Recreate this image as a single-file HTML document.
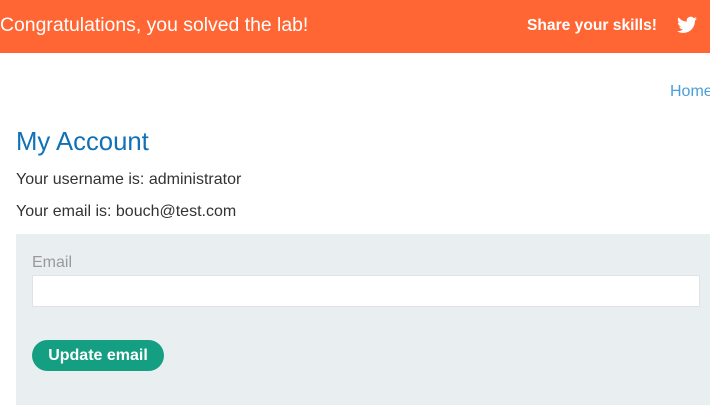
<!DOCTYPE html>
<html><head><style>
*{margin:0;padding:0;box-sizing:border-box}
body{width:710px;height:405px;overflow:hidden;background:#fff;font-family:"Liberation Sans",Arial,sans-serif;position:relative}
.top{position:absolute;left:0;top:0;width:710px;height:53px;background:#ff6633;color:#fff}
.top .t{position:absolute;left:0;top:14px;font-size:19.4px}
.top .s{position:absolute;left:527px;top:17px;font-size:15.6px;font-weight:bold}
.top svg{position:absolute;left:677px;top:16px}
.home{position:absolute;left:670px;top:83px;font-size:16px;color:#4a9fd8}
h1{position:absolute;left:16px;top:128px;font-size:25.7px;font-weight:normal;color:#0f71b7}
.p{position:absolute;left:16px;font-size:16px;color:#333}
.box{position:absolute;left:16px;top:234px;width:694px;height:171px;background:#e9eef1}
.lab{position:absolute;left:16px;top:20px;font-size:16px;color:#999}
.in{position:absolute;left:16px;top:41px;width:668px;height:32px;background:#fff;border:1px solid #dfe3e6}
.btn{position:absolute;left:16px;top:106px;width:132px;height:31px;border-radius:16px;background:#159f82;color:#fff;font-weight:bold;font-size:16px;text-align:center;line-height:31px}
</style></head><body>
<div class="top"><div class="t">Congratulations, you solved the lab!</div><div class="s">Share your skills!</div>
<svg width="20" height="18" viewBox="0 0 24 20"><path fill="#fff" d="M24 2.4a10 10 0 0 1-2.8.8A5 5 0 0 0 23.3.4a10 10 0 0 1-3.1 1.2A4.9 4.9 0 0 0 11.8 6 14 14 0 0 1 1.7.9a4.9 4.9 0 0 0 1.5 6.6 4.9 4.9 0 0 1-2.200-.6 4.9 4.9 0 0 0 3.9 4.9 5 5 0 0 1-2.2.1 4.9 4.9 0 0 0 4.6 3.4A9.9 9.9 0 0 1 0 17.3 14 14 0 0 0 7.5 19.5c9 0 14-7.5 14-14v-.6A10 10 0 0 0 24 2.4z"/></svg></div>
<div class="home">Home</div>
<h1>My Account</h1>
<div class="p" style="top:171px">Your username is: administrator</div>
<div class="p" style="top:203px">Your email is: bouch@test.com</div>
<div class="box"><div class="lab">Email</div><div class="in"></div><div class="btn">Update email</div></div>
</body></html>
